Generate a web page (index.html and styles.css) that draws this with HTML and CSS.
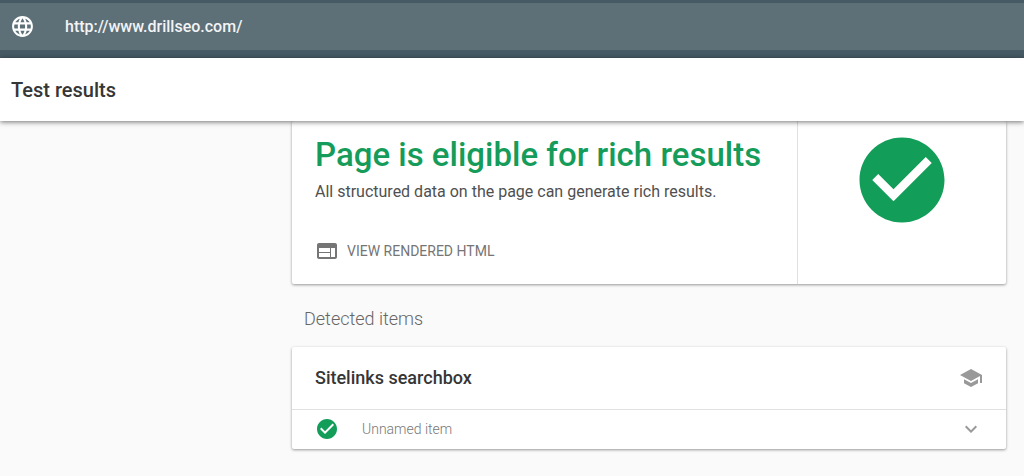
FILE: index.html
```html
<!DOCTYPE html>
<html lang="en">
<head>
<meta charset="utf-8">
<meta name="viewport" content="width=device-width, initial-scale=1">
<title>Test results</title>
<link rel="stylesheet" href="styles.css">
</head>
<body>
<div class="topbar">
  <label class="url-field">
    <svg class="icon icon-globe" viewBox="0 0 24 24" aria-hidden="true"><path d="M11.99 2C6.47 2 2 6.48 2 12s4.47 10 9.99 10C17.52 22 22 17.52 22 12S17.52 2 11.99 2zm6.93 6h-2.95c-.32-1.25-.78-2.45-1.38-3.56 1.84.63 3.37 1.91 4.33 3.56zM12 4.04c.83 1.2 1.48 2.53 1.91 3.96h-3.82c.43-1.43 1.08-2.76 1.91-3.96zM4.26 14C4.1 13.36 4 12.69 4 12s.1-1.36.26-2h3.38c-.08.66-.14 1.32-.14 2s.06 1.34.14 2H4.26zm.82 2h2.95c.32 1.25.78 2.45 1.38 3.56-1.84-.63-3.37-1.9-4.33-3.56zm2.95-8H5.08c.96-1.66 2.49-2.93 4.33-3.56C8.81 5.55 8.35 6.75 8.03 8zM12 19.96c-.83-1.2-1.48-2.53-1.91-3.96h3.82c-.43 1.43-1.08 2.76-1.91 3.96zM14.34 14H9.66c-.09-.66-.16-1.32-.16-2s.07-1.35.16-2h4.68c.09.65.16 1.32.16 2s-.07 1.34-.16 2zm.25 5.56c.6-1.11 1.06-2.31 1.38-3.56h2.95c-.96 1.65-2.49 2.93-4.33 3.56zM16.36 14c.08-.66.14-1.32.14-2s-.06-1.34-.14-2h3.38c.16.64.26 1.31.26 2s-.1 1.36-.26 2h-3.38z"/></svg>
    <input class="url-input" type="url" value="http://www.drillseo.com/" aria-label="Tested URL">
  </label>
</div>
<header class="header">
  <h1 class="header-title">Test results</h1>
</header>
<main class="content">
  <section class="card verdict">
    <div class="verdict-body">
      <h2 class="verdict-title">Page is eligible for rich results</h2>
      <p class="verdict-text">All structured data on the page can generate rich results.</p>
      <button class="view-button" type="button">
        <svg class="icon" viewBox="0 0 24 24" aria-hidden="true"><path d="M20 4H4c-1.1 0-1.99.9-1.99 2L2 18c0 1.1.9 2 2 2h16c1.1 0 2-.9 2-2V6c0-1.1-.9-2-2-2zm-5 14H4v-4h11v4zm0-5H4V9h11v4zm5 5h-4V9h4v9z"/></svg>
        <span>VIEW RENDERED HTML</span>
      </button>
    </div>
    <div class="verdict-status">
      <svg class="icon icon-verdict" viewBox="0 0 24 24" role="img" aria-label="Passed"><path d="M12 2C6.48 2 2 6.48 2 12s4.48 10 10 10 10-4.480 10-10S17.520 2 12 2zm-2 15l-5-5 1.410-1.410L10 14.170l7.590-7.590L19 8l-9 9z"/></svg>
    </div>
  </section>
  <h2 class="section-title">Detected items</h2>
  <section class="card">
    <div class="item-header">
      <h3 class="item-title">Sitelinks searchbox</h3>
      <a class="help-link" href="#" aria-label="Learn more">
        <svg class="icon" viewBox="0 0 24 24" aria-hidden="true"><path d="M5 13.180v4L12 21l7-3.820v-4L12 17l-7-3.820zM12 3L1 9l11 6 9-4.910V17h2V9L12 3z"/></svg>
      </a>
    </div>
    <button class="item-row" type="button" aria-expanded="false">
      <svg class="icon icon-ok" viewBox="0 0 24 24" aria-hidden="true"><path d="M12 2C6.480 2 2 6.480 2 12s4.480 10 10 10 10-4.480 10-10S17.520 2 12 2zm-2 15l-5-5 1.410-1.410L10 14.170l7.590-7.590L19 8l-9 9z"/></svg>
      <span class="item-name">Unnamed item</span>
      <svg class="icon" viewBox="0 0 24 24" aria-hidden="true"><path d="M16.590 8.590L12 13.170 7.410 8.590 6 10l6 6 6-6z"/></svg>
    </button>
  </section>
</main>
</body>
</html>
```
FILE: styles.css
```css
* {
  box-sizing: border-box;
}

body {
  margin: 0;
  background: #fafafa;
  color: #363636;
  font-family: Roboto, "Liberation Sans", sans-serif;
  font-size: 16px;
}

h1, h2, h3, p {
  margin: 0;
}

button {
  padding: 0;
  border: 0;
  background: none;
  font: inherit;
  cursor: pointer;
}

.icon {
  display: block;
  flex: none;
  width: 24px;
  height: 24px;
  fill: currentColor;
}

.topbar {
  padding: 3px 0 8px;
  background: #455a64;
}

.url-field {
  display: flex;
  align-items: center;
  gap: 30px;
  height: 47px;
  padding: 0 10px;
  background: #5d6f77;
  color: #fff;
}

.icon-globe {
  width: 25px;
  height: 25px;
}

.url-input {
  flex: 1;
  min-width: 0;
  padding: 0;
  border: 0;
  outline: 0;
  background: none;
  color: #f2f4f5;
  font: 500 16px/24px Roboto, "Liberation Sans", sans-serif;
}

.header {
  position: relative;
  z-index: 1;
  padding: 20px 11px 19px;
  background: #fff;
  box-shadow: 0 1px 5px rgba(0, 0, 0, 0.55);
}

.header-title {
  font-size: 20px;
  font-weight: 500;
  line-height: 24px;
}

.content {
  padding: 0 18px 24px 292px;
}

.card {
  background: #fff;
  border-radius: 2px;
  box-shadow: 0 1px 3px rgba(0, 0, 0, 0.4);
}

.verdict {
  display: flex;
}

.verdict-body {
  flex: 1;
  padding: 12px 23px 21px;
}

.verdict-title {
  color: #159c5a;
  font-size: 33px;
  font-weight: 500;
  line-height: 44px;
}

.verdict-text {
  margin-bottom: 32px;
  color: #505050;
  line-height: 30px;
}

.view-button {
  display: flex;
  align-items: center;
  gap: 8px;
  color: #757575;
  font-size: 14px;
}

.verdict-status {
  display: flex;
  justify-content: center;
  width: 209px;
  padding-top: 8px;
  border-left: 1px solid #e0e0e0;
}

.icon-verdict {
  width: 102px;
  height: 102px;
  color: #129d58;
}

.section-title {
  padding: 23px 12px 16px;
  color: #666;
  font-size: 18px;
  font-weight: 300;
  line-height: 24px;
}

.item-header {
  display: flex;
  align-items: center;
  justify-content: space-between;
  padding: 19px 23px;
  border-bottom: 1px solid #e0e0e0;
}

.item-title {
  font-size: 18px;
  font-weight: 500;
  line-height: 24px;
}

.help-link {
  color: #999;
}

.item-row {
  display: flex;
  align-items: center;
  width: 100%;
  padding: 7px 23px 8px;
  color: #999;
  font-size: 14px;
  text-align: left;
}

.icon-ok {
  color: #129d58;
}

.item-name {
  flex: 1;
  padding-left: 23px;
  color: #777;
  font-weight: 300;
}
```
